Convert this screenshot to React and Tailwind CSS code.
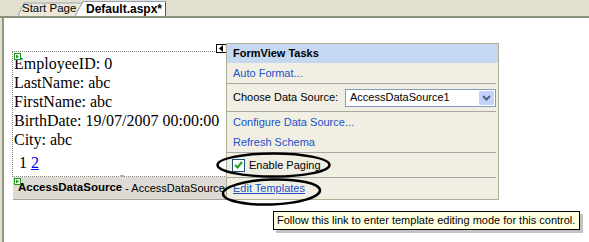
import React from "react"

function GreenTag() {
  return (
    <svg width="7" height="7" viewBox="0 0 7 7" className="absolute left-[1px] top-[1px]">
      <rect x="0.5" y="0.5" width="6" height="6" fill="#ffffff" stroke="#1e9a1e" />
      <path d="M2 1.5 L5 3.5 L2 5.5 Z" fill="#1e9a1e" />
    </svg>
  )
}

function TabStrip() {
  return (
    <div className="flex h-[18px] items-end bg-[#e2dfcf] border-b-2 border-[#85907d] pl-[18px]">
      <div className="relative flex h-[14px] w-[64px] items-center pl-[4px] text-[11.5px] text-black">
        <svg className="absolute inset-0" width="64" height="14" viewBox="0 0 64 14">
          <polygon points="0,14 6,1 64,1 64,14" fill="#ebe8da" />
          <polyline points="0,14 6,1 64,1" fill="none" stroke="#9aa6b6" />
        </svg>
        <span className="relative">Start Page</span>
      </div>
      <div className="relative -ml-[7px] flex h-[15px] w-[91px] items-center pl-[11px] text-[12px] font-bold text-black">
        <svg className="absolute inset-0" width="91" height="15" viewBox="0 0 91 15">
          <polygon points="0,15 8,1 90,1 90,15" fill="#ffffff" />
          <polyline points="0,15 8,0.5 90.5,0.5 90.5,15" fill="none" stroke="#8f9fb5" />
          <line x1="90.5" y1="1" x2="90.5" y2="15" stroke="#555555" />
        </svg>
        <span className="relative">Default.aspx*</span>
      </div>
    </div>
  )
}

function FormView() {
  return (
    <div className="relative h-[126px] w-[217px] border border-dotted border-[#808080] pl-[1px] pt-[2px] font-['Liberation_Serif','Times_New_Roman',serif] text-[16px] leading-[19px] text-black">
      <GreenTag />
      <div>EmployeeID: 0</div>
      <div>LastName: abc</div>
      <div>FirstName: abc</div>
      <div>BirthDate: 19/07/2007 00:00:00</div>
      <div>City: abc</div>
      <div className="mt-[4px] flex gap-[4px] pl-[5px]">
        <span>1</span>
        <span className="text-[#0000ee] underline">2</span>
      </div>
      <div className="absolute -bottom-[2px] left-[107px] h-[3px] w-[4px] bg-[#b0b0b0]" />
    </div>
  )
}

function DataSourceBar() {
  return (
    <div className="relative ml-[1px] flex h-[23px] w-[216px] items-center whitespace-nowrap border-b border-[#a4a4a0] bg-[#dddbd3] pl-[5px] text-black">
      <GreenTag />
      <span className="text-[11.5px] font-bold">AccessDataSource</span>
      <span className="text-[11px]">&nbsp;- AccessDataSource1</span>
    </div>
  )
}

function Separator() {
  return <div className="mr-[2px] h-[1px] bg-[#a9a9a2]" />
}

function TasksPanel() {
  return (
    <>
      <div className="absolute left-[216px] top-[44px] flex h-[9px] w-[11px] items-center justify-center border border-black bg-white">
        <svg width="5" height="7" viewBox="0 0 5 7">
          <path d="M4 0 L0 3.5 L4 7 Z" fill="#000000" />
        </svg>
      </div>
      <div className="absolute left-[226px] top-[43px] flex h-[157px] w-[273px] flex-col border border-[#aeae94] bg-[#f1efe4] text-[11px] text-black">
        <div className="flex h-[19px] items-center bg-[#c6d8f1] pl-[6px] font-bold">FormView Tasks</div>
        <div className="flex h-[20px] items-center pl-[6px] text-[#2052c8]">Auto Format...</div>
        <Separator />
        <div className="flex h-[27px] items-center pl-[6px] pr-[2px]">
          <span>Choose Data Source:</span>
          <div className="ml-auto flex h-[18px] w-[151px] items-center border border-[#7f9db9] bg-white pl-[4px]">
            <span>AccessDataSource1</span>
            <div className="ml-auto mr-[1px] flex h-[14px] w-[15px] items-center justify-center rounded-[1px] bg-[#c3d3fb]">
              <svg width="9" height="6" viewBox="0 0 9 6">
                <path d="M1 1 L4.5 4.5 L8 1" fill="none" stroke="#4d6185" strokeWidth="2" />
              </svg>
            </div>
          </div>
        </div>
        <Separator />
        <div className="flex h-[20px] items-center pl-[6px] text-[#2052c8]">Configure Data Source...</div>
        <div className="flex h-[20px] items-center pl-[6px] text-[#2052c8]">Refresh Schema</div>
        <Separator />
        <div className="flex h-[24px] items-center gap-[4px] pl-[5px]">
          <div className="flex h-[13px] w-[13px] items-center justify-center border border-[#1c5180] bg-white">
            <svg width="9" height="8" viewBox="0 0 9 8">
              <path d="M1 4 L3.5 6.5 L8 1" fill="none" stroke="#21a121" strokeWidth="2" />
            </svg>
          </div>
          <span>Enable Paging</span>
        </div>
        <Separator />
        <div className="flex h-[21px] items-center pl-[6px] text-[#2052c8] underline">Edit Templates</div>
      </div>
    </>
  )
}

function Tooltip() {
  return (
    <div className="absolute left-[273px] top-[211px] flex h-[19px] w-[307px] items-center whitespace-nowrap border border-black bg-[#ffffe1] pl-[3px] text-[11px] text-black shadow-[3px_3px_0_rgba(120,120,120,0.45)]">
      Follow this link to enter template editing mode for this control.
    </div>
  )
}

function Annotations() {
  return (
    <svg className="pointer-events-none absolute inset-0" width="589" height="242" viewBox="0 0 589 242">
      <ellipse cx="273.5" cy="165" rx="56" ry="11.5" fill="none" stroke="#000000" strokeWidth="2.5" />
      <ellipse cx="271.5" cy="192" rx="48.5" ry="12.5" fill="none" stroke="#000000" strokeWidth="2.5" transform="rotate(-2 271.5 192)" />
    </svg>
  )
}

export default function App() {
  return (
    <div className="relative h-[242px] w-[589px] overflow-hidden bg-white font-['Liberation_Sans',Arial,sans-serif]">
      <TabStrip />
      <div className="flex h-[224px]">
        <div className="w-[2px] bg-[#e2dfcf]" />
        <div className="w-[2px] bg-[#8d9885]" />
        <div className="pl-[8px] pt-[33px]">
          <FormView />
          <DataSourceBar />
        </div>
      </div>
      <TasksPanel />
      <Tooltip />
      <Annotations />
    </div>
  )
}
